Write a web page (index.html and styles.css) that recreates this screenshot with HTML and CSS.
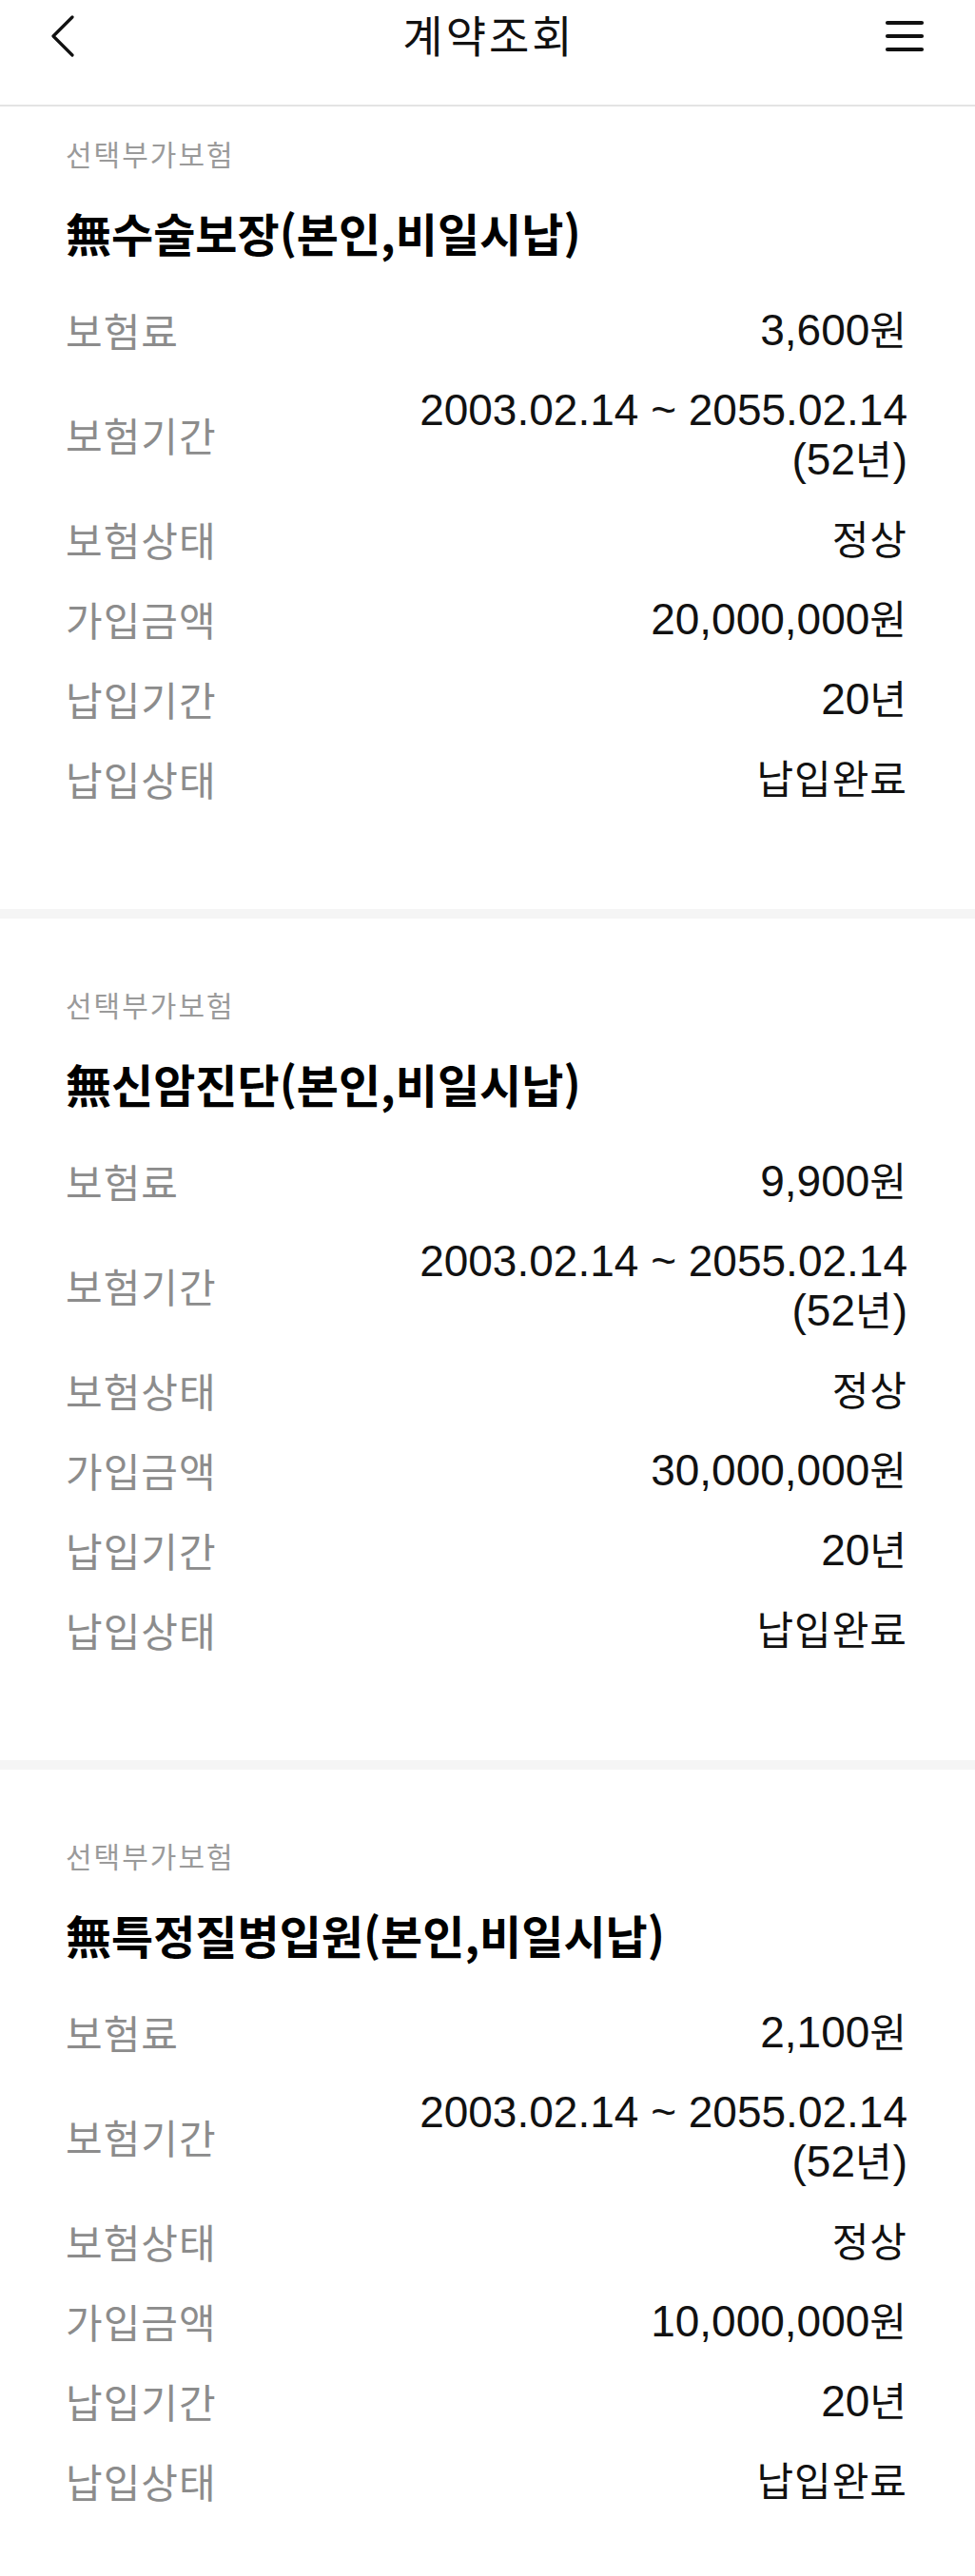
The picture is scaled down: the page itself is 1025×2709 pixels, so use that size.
FILE: index.html
```html
<!DOCTYPE html>
<html lang="ko">
<head>
<meta charset="utf-8">
<title>계약조회</title>
<link rel="stylesheet" href="styles.css">
</head>
<body>
<header class="topbar">
  <div class="bar">
    <button class="icon-btn back" aria-label="뒤로">
      <svg width="26" height="44" viewBox="0 0 26 44"><polyline points="23,2 3,22 23,42" fill="none" stroke="#111" stroke-width="3.2" stroke-linecap="round" stroke-linejoin="round"/></svg>
    </button>
    <h1 class="page-title">계약조회</h1>
    <button class="icon-btn menu" aria-label="메뉴">
      <svg width="42" height="34" viewBox="0 0 42 34"><g stroke="#111" stroke-width="4.2" stroke-linecap="round"><line x1="3" y1="3" x2="39" y2="3"/><line x1="3" y1="17" x2="39" y2="17"/><line x1="3" y1="31" x2="39" y2="31"/></g></svg>
    </button>
  </div>
</header>

<main>
  <section class="rider first">
    <p class="rider-type">선택부가보험</p>
    <h2 class="rider-name">無수술보장(본인,비일시납)</h2>
    <dl class="rows">
      <div class="row"><dt>보험료</dt><dd>3,600<span class="ko">원</span></dd></div>
      <div class="row"><dt>보험기간</dt><dd>2003.02.14 ~ 2055.02.14<br>(52<span class="ko">년</span>)</dd></div>
      <div class="row"><dt>보험상태</dt><dd><span class="ko">정상</span></dd></div>
      <div class="row"><dt>가입금액</dt><dd>20,000,000<span class="ko">원</span></dd></div>
      <div class="row"><dt>납입기간</dt><dd>20<span class="ko">년</span></dd></div>
      <div class="row"><dt>납입상태</dt><dd><span class="ko">납입완료</span></dd></div>
    </dl>
  </section>

  <section class="rider">
    <p class="rider-type">선택부가보험</p>
    <h2 class="rider-name">無신암진단(본인,비일시납)</h2>
    <dl class="rows">
      <div class="row"><dt>보험료</dt><dd>9,900<span class="ko">원</span></dd></div>
      <div class="row"><dt>보험기간</dt><dd>2003.02.14 ~ 2055.02.14<br>(52<span class="ko">년</span>)</dd></div>
      <div class="row"><dt>보험상태</dt><dd><span class="ko">정상</span></dd></div>
      <div class="row"><dt>가입금액</dt><dd>30,000,000<span class="ko">원</span></dd></div>
      <div class="row"><dt>납입기간</dt><dd>20<span class="ko">년</span></dd></div>
      <div class="row"><dt>납입상태</dt><dd><span class="ko">납입완료</span></dd></div>
    </dl>
  </section>

  <section class="rider">
    <p class="rider-type">선택부가보험</p>
    <h2 class="rider-name">無특정질병입원(본인,비일시납)</h2>
    <dl class="rows">
      <div class="row"><dt>보험료</dt><dd>2,100<span class="ko">원</span></dd></div>
      <div class="row"><dt>보험기간</dt><dd>2003.02.14 ~ 2055.02.14<br>(52<span class="ko">년</span>)</dd></div>
      <div class="row"><dt>보험상태</dt><dd><span class="ko">정상</span></dd></div>
      <div class="row"><dt>가입금액</dt><dd>10,000,000<span class="ko">원</span></dd></div>
      <div class="row"><dt>납입기간</dt><dd>20<span class="ko">년</span></dd></div>
      <div class="row"><dt>납입상태</dt><dd><span class="ko">납입완료</span></dd></div>
    </dl>
  </section>
</main>
</body>
</html>
```

FILE: styles.css
```css
* { box-sizing: border-box; }

html, body {
  margin: 0;
  padding: 0;
  background: #ffffff;
}

body {
  font-family: "Noto Sans CJK KR", "Noto Sans", sans-serif;
  color: #111111;
}

/* ---------- header ---------- */
.topbar {
  height: 112px;
  border-bottom: 2px solid #e4e4e4;
  background: #ffffff;
}

.bar {
  height: 76px;
  display: grid;
  grid-template-columns: 1fr auto 1fr;
  align-items: center;
  padding: 0 53px 0 53px;
}

.icon-btn {
  background: none;
  border: 0;
  padding: 0;
  margin: 0;
  display: flex;
  align-items: center;
  cursor: pointer;
}

.back { justify-self: start; }
.menu { justify-self: end; }

.page-title {
  margin: 0 0 6px 3px;
  font-size: 46px;
  font-weight: 400;
  letter-spacing: 3px;
  line-height: 56px;
  color: #111111;
}

/* ---------- sections ---------- */
.rider {
  padding: 70px 71px 95px 69px;
  border-top: 10px solid #f5f5f5;
}

.rider.first {
  padding-top: 29px;
  border-top: 0;
}

.rider-type {
  margin: 0;
  font-size: 30px;
  line-height: 40px;
  letter-spacing: 2px;
  color: #9a9a9a;
  font-weight: 400;
}

.rider-name {
  margin: 33px 0 0 0;
  font-size: 48px;
  line-height: 60px;
  font-weight: 700;
  letter-spacing: 0;
  color: #000000;
}

.rows {
  margin: 31px 0 0 0;
  padding: 0;
}

.row {
  display: flex;
  justify-content: space-between;
  align-items: center;
  padding: 16px 0;
}

.row dt {
  margin: 0;
  font-size: 42px;
  line-height: 52px;
  letter-spacing: 1px;
  color: #8c8c8c;
  white-space: nowrap;
}

.row dd {
  margin: 0;
  flex-shrink: 0;
  white-space: nowrap;
  text-align: right;
  font-family: "Liberation Sans", "Noto Sans CJK KR", sans-serif;
  font-size: 46px;
  line-height: 52px;
  color: #111111;
}

.ko {
  font-family: "Noto Sans CJK KR", "Noto Sans", sans-serif;
  font-size: 42px;
  line-height: 1;
  letter-spacing: 1px;
}
```
